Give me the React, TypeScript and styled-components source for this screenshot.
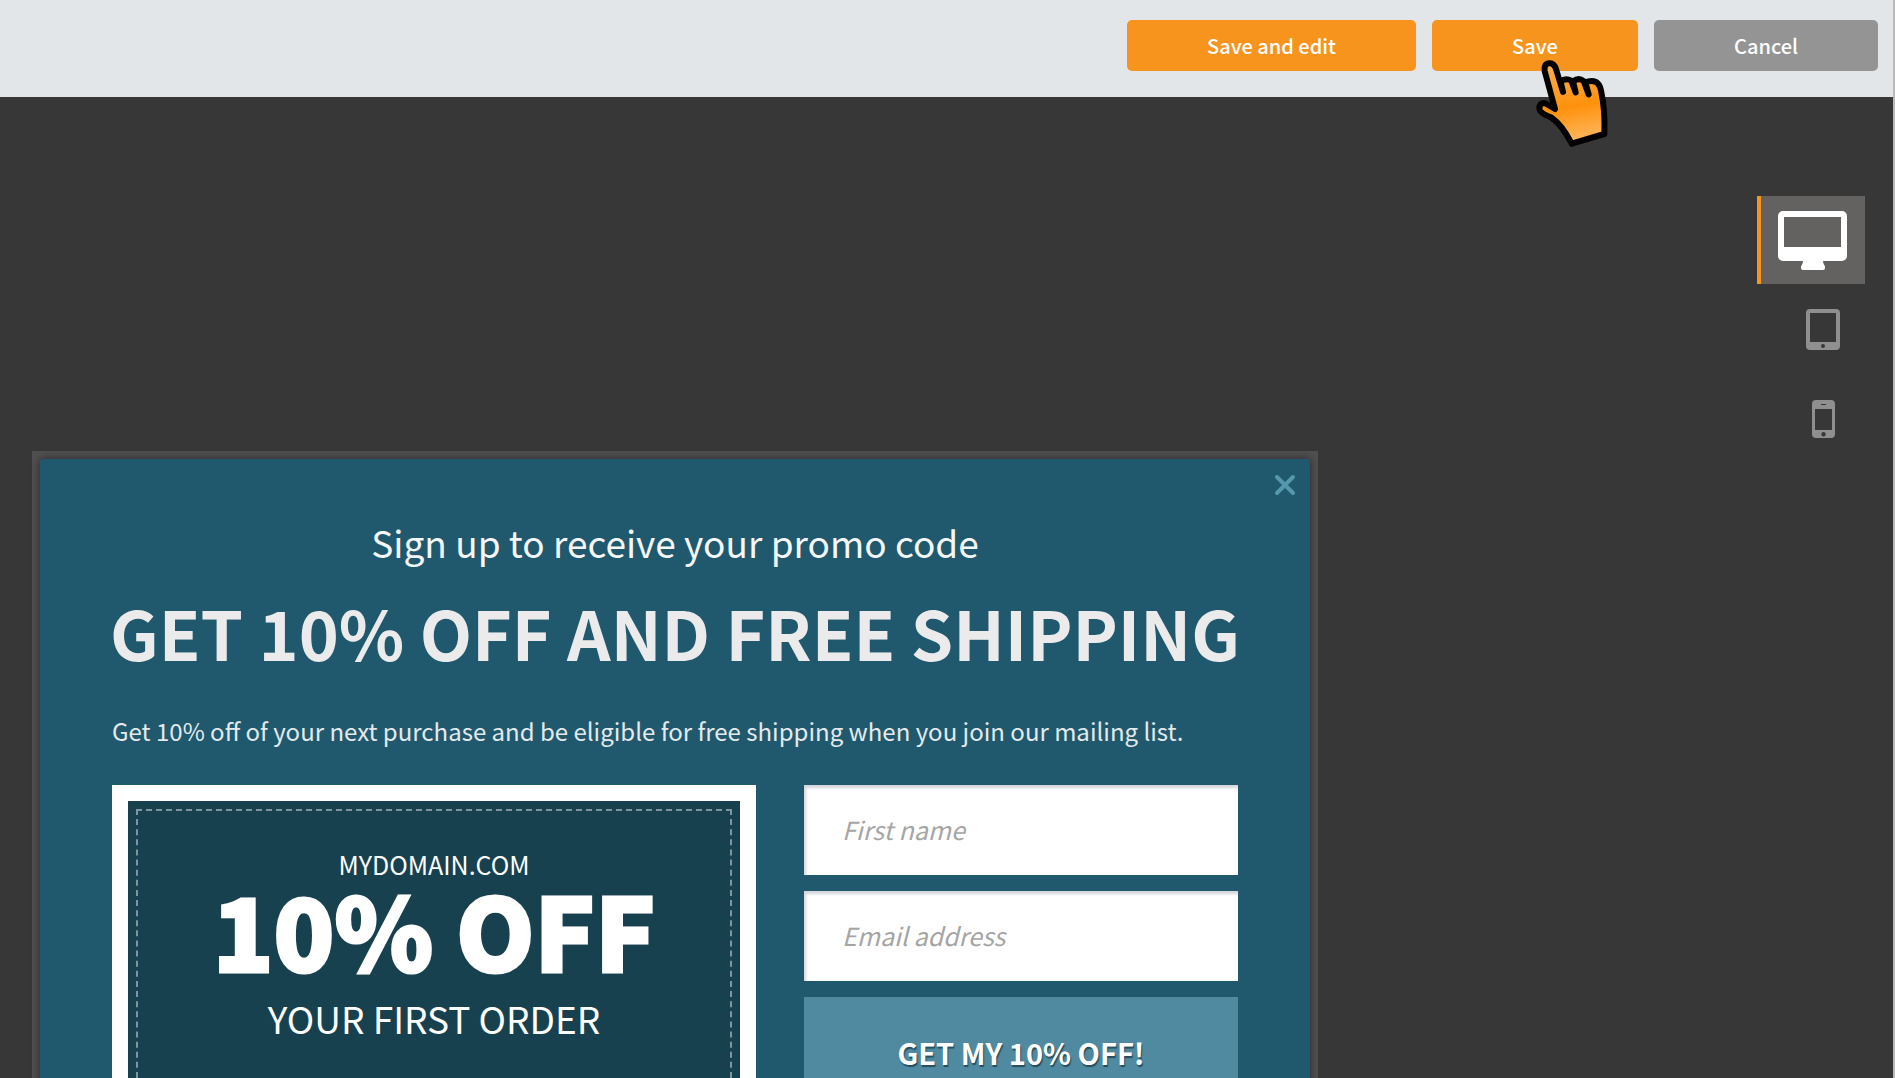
import React from "react";
import styled, { createGlobalStyle } from "styled-components";

const GlobalStyle = createGlobalStyle`
  *, *::before, *::after { box-sizing: border-box; }
  body {
    margin: 0;
    background: #373737;
    font-family: "Noto Sans CJK JP", "Noto Sans", sans-serif;
    color: #ffffff;
  }
  button, input { font-family: inherit; }
  h1, h2, p { margin: 0; font-weight: 400; }
`;

const Page = styled.div`
  height: 100vh;
  display: flex;
  flex-direction: column;
  overflow: hidden;
  border-right: 2px solid #b9b9b9;
`;

const Toolbar = styled.header`
  flex: none;
  display: flex;
  justify-content: flex-end;
  gap: 16px;
  padding: 20px 15px 26px;
  background: #e2e6e9;
`;

const ToolbarButton = styled.button<{ $tone: string; $width: number }>`
  position: relative;
  width: ${(p) => p.$width}px;
  height: 51px;
  padding: 0;
  border: 0;
  border-radius: 5px;
  background: ${(p) => p.$tone};
  color: #ffffff;
  font-size: 20px;
  font-weight: 500;
  line-height: 51px;
  cursor: pointer;
`;

const Pointer = styled.svg`
  position: absolute;
  left: 100px;
  top: 37px;
  z-index: 2;
  width: 80px;
  height: 92px;
  pointer-events: none;
`;

const Stage = styled.main`
  flex: 1;
  min-height: 0;
  display: flex;
  justify-content: space-between;
  align-items: flex-start;
`;

const Rail = styled.nav`
  display: flex;
  flex-direction: column;
  align-items: flex-end;
  padding: 99px 28px 0 0;
`;

const Device = styled.button<{ $active?: boolean }>`
  display: flex;
  align-items: center;
  justify-content: center;
  width: ${(p) => (p.$active ? 108 : 84)}px;
  height: ${(p) => (p.$active ? 88 : 90)}px;
  padding: 0;
  border: 0;
  border-left: ${(p) => (p.$active ? "4px solid #f7941d" : "0")};
  background: ${(p) => (p.$active ? "#636261" : "transparent")};
  color: ${(p) => (p.$active ? "#ffffff" : "#8f8f8f")};
  cursor: pointer;
`;

const Frame = styled.section`
  flex: 0 1 1286px;
  min-width: 0;
  margin: 354px 0 0 32px;
  padding: 8px;
  background: #504f4f;
`;

const Popup = styled.div`
  position: relative;
  padding: 59px 72px 80px;
  border-radius: 4px 4px 0 0;
  background: #20596d;
  box-shadow: 0 0 8px rgba(0, 0, 0, 0.5);
`;

const Close = styled.button`
  position: absolute;
  top: 15px;
  right: 14px;
  display: flex;
  padding: 0;
  border: 0;
  background: none;
  color: #5598ae;
  cursor: pointer;
`;

const Lead = styled.p`
  font-size: 37px;
  line-height: 48px;
  text-align: center;
  color: #f4f6f7;
`;

const Title = styled.h1`
  display: flex;
  justify-content: center;
  margin-top: 18px;
  font-size: 68px;
  font-weight: 700;
  line-height: 96px;
  white-space: nowrap;
  color: #ebebeb;
`;

const Note = styled.p`
  margin-top: 31px;
  font-size: 24px;
  line-height: 40px;
  white-space: nowrap;
  color: #e4eaec;
`;

const Columns = styled.div`
  display: flex;
  gap: 48px;
  margin-top: 34px;
`;

const Coupon = styled.div`
  flex: 1;
  padding: 8px;
  border: 16px solid #ffffff;
  background: #17414f;
`;

const CouponInner = styled.div`
  min-height: 360px;
  padding-top: 33px;
  border: 2px dashed #7f969e;
  text-align: center;
  white-space: nowrap;
`;

const Domain = styled.p`
  font-size: 25px;
  line-height: 40px;
`;

const Offer = styled.h2`
  font-size: 100px;
  font-weight: 900;
  line-height: 90px;
  -webkit-text-stroke: 3px #ffffff;
`;

const Terms = styled.p`
  font-size: 37px;
  line-height: 88px;
`;

const SignUp = styled.form`
  flex: 0 0 434px;
  display: flex;
  flex-direction: column;
  gap: 16px;
`;

const Field = styled.input`
  width: 100%;
  height: 90px;
  padding: 0 38px 2px;
  border: 0;
  border-radius: 0;
  background: #ffffff;
  box-shadow: inset 2px 3px 3px rgba(40, 50, 80, 0.2);
  color: #333333;
  font-size: 25px;
  &::placeholder {
    color: #a5a5a5;
    font-style: italic;
    opacity: 1;
  }
`;

const Submit = styled.button`
  height: 110px;
  padding: 0;
  border: 0;
  background: #4f8aa0;
  color: #ffffff;
  font-size: 29px;
  font-weight: 700;
  line-height: 110px;
  text-shadow: 1px 2px 1px rgba(20, 50, 65, 0.7);
  cursor: pointer;
`;

const HandPointer = () => (
  <Pointer viewBox="100 50 240 276" aria-hidden="true">
    <defs>
      <linearGradient id="hand" x1="0" y1="0" x2="0.15" y2="1">
        <stop offset="0" stopColor="#fbb055" />
        <stop offset="0.6" stopColor="#ff910c" />
        <stop offset="1" stopColor="#ffb458" />
      </linearGradient>
    </defs>
    <path
      d="M169 206 L138 92 Q135 70 152 69 Q166 68 172 86 L193 155 L186 124 Q200 111 218 121 L231 156 L223 123 Q240 110 255 122 L270 162 L260 126 Q278 118 292 125 Q303 131 307 150 Q320 210 317 281 L219 310 C201 274 182 248 159 232 C136 224 122 216 122 204 Q122 188 138 188 Z"
      fill="url(#hand)"
      stroke="#000000"
      strokeWidth="18"
      strokeLinejoin="round"
      strokeLinecap="round"
    />
  </Pointer>
);

const DesktopIcon = () => (
  <svg width="70" height="60" viewBox="0 0 70 60" aria-hidden="true">
    <path
      fill="currentColor"
      fillRule="evenodd"
      d="M5 1h59a5 5 0 0 1 5 5v40a5 5 0 0 1-5 5H45c0 3 2 4 2 6v1a2 2 0 0 1-2 2H25a2 2 0 0 1-2-2v-1c0-2 2-3 2-6H5a5 5 0 0 1-5-5V6a5 5 0 0 1 5-5zM6 7v30h57V7z"
    />
  </svg>
);

const TabletIcon = () => (
  <svg width="34" height="41" viewBox="0 0 34 41" aria-hidden="true">
    <path
      fill="currentColor"
      fillRule="evenodd"
      d="M4 0h26a4 4 0 0 1 4 4v33a4 4 0 0 1-4 4H4a4 4 0 0 1-4-4V4a4 4 0 0 1 4-4zM4 4v29h26V4zM17 35a2 2 0 1 0 0 4a2 2 0 1 0 0-4z"
    />
  </svg>
);

const PhoneIcon = () => (
  <svg width="23" height="38" viewBox="0 0 23 38" aria-hidden="true">
    <path
      fill="currentColor"
      fillRule="evenodd"
      d="M4 0h15a4 4 0 0 1 4 4v30a4 4 0 0 1-4 4H4a4 4 0 0 1-4-4V4a4 4 0 0 1 4-4zM3 9v21h17V9zM9 4v1h5V4zM11.500 32a2.200 2.200 0 1 0 0 4.400a2.200 2.200 0 1 0 0-4.400z"
    />
  </svg>
);

const CrossIcon = () => (
  <svg width="22" height="22" viewBox="0 0 22 22" aria-hidden="true">
    <path d="M3 3l16 16M19 3L3 19" stroke="currentColor" strokeWidth="4" strokeLinecap="round" />
  </svg>
);

export default function App() {
  return (
    <Page>
      <GlobalStyle />
      <Toolbar>
        <ToolbarButton type="button" $tone="#f7941d" $width={289}>
          Save and edit
        </ToolbarButton>
        <ToolbarButton type="button" $tone="#f7941d" $width={206}>
          Save
          <HandPointer />
        </ToolbarButton>
        <ToolbarButton type="button" $tone="#949494" $width={224}>
          Cancel
        </ToolbarButton>
      </Toolbar>
      <Stage>
        <Frame>
          <Popup>
            <Close type="button" aria-label="Close">
              <CrossIcon />
            </Close>
            <Lead>Sign up to receive your promo code</Lead>
            <Title>GET 10% OFF AND FREE SHIPPING</Title>
            <Note>
              Get 10% off of your next purchase and be eligible for free shipping when you join our
              mailing list.
            </Note>
            <Columns>
              <Coupon>
                <CouponInner>
                  <Domain>MYDOMAIN.COM</Domain>
                  <Offer>10% OFF</Offer>
                  <Terms>YOUR FIRST ORDER</Terms>
                </CouponInner>
              </Coupon>
              <SignUp onSubmit={(e) => e.preventDefault()}>
                <Field type="text" aria-label="First name" placeholder="First name" />
                <Field type="email" aria-label="Email address" placeholder="Email address" />
                <Submit type="submit">GET MY 10% OFF!</Submit>
              </SignUp>
            </Columns>
          </Popup>
        </Frame>
        <Rail aria-label="Preview device">
          <Device type="button" $active aria-label="Desktop">
            <DesktopIcon />
          </Device>
          <Device type="button" aria-label="Tablet">
            <TabletIcon />
          </Device>
          <Device type="button" aria-label="Phone">
            <PhoneIcon />
          </Device>
        </Rail>
      </Stage>
    </Page>
  );
}
